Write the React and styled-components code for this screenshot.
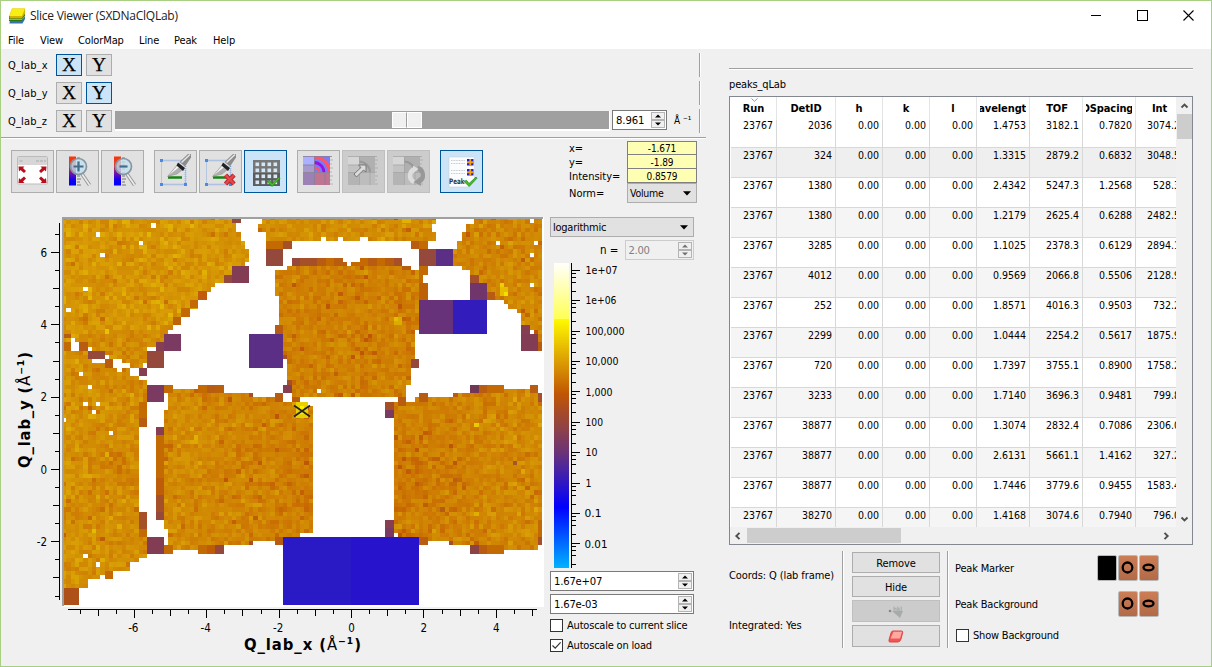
import React from "react";
import styled, { createGlobalStyle } from "styled-components";

const UI = `"DejaVu Sans Condensed", "DejaVu Sans", sans-serif`;

const Global = createGlobalStyle`
  html, body { margin: 0; padding: 0; }
  * { box-sizing: border-box; }
  body { font-family: ${UI}; font-stretch: condensed; font-size: 10.5px; color: #000; overflow: hidden; }
  svg { display: block; }
  svg text { font-family: ${UI}; font-stretch: condensed; }
`;

/* ---------- window ---------- */
const Window = styled.div`
  width: 1212px; height: 667px; display: flex; flex-direction: column;
  background: #f0f0f0; border: 1px solid #a9cf82;
`;
const TitleBar = styled.header`
  height: 29px; background: #fff; display: flex; align-items: center; padding-left: 7px;
`;
const Title = styled.span`
  font-family: "Open Sans", sans-serif; font-stretch: normal; font-size: 12px; letter-spacing: -0.26px;
  margin-left: 4px; flex: 1; color: #222;
`;
const WinButton = styled.div`
  width: 46px; height: 29px; display: flex; align-items: center; justify-content: center;
`;
const MenuBar = styled.nav`
  height: 19px; background: #fff; display: flex; padding-left: 7px; line-height: 21px;
`;
const MenuItem = styled.span`
  width: ${(p) => p.$w}px; letter-spacing: -0.12px; font-size: 11px; white-space: nowrap;
`;
const Body = styled.div`flex: 1; display: flex; min-height: 0;`;
const Left = styled.section`width: 705px; display: flex; flex-direction: column;`;
const Right = styled.section`width: 464px; margin-left: 23px; display: flex; flex-direction: column; padding-top: 19px;`;

/* ---------- dimension rows ---------- */
const DimRows = styled.div`
  height: 89px; padding: 5px 0 0 7px; border-bottom: 1px solid #a0a0a0; box-shadow: 0 1px #fff;
`;
const DimRow = styled.div`height: 28px; display: flex; align-items: flex-start;`;
const DimName = styled.span`width: 48px; line-height: 23px; font-size: 11px; letter-spacing: 0.15px;`;
const AxisButton = styled.button`
  width: 26px; height: 22px; padding: 0; margin-right: 4px; display: flex; align-items: center; justify-content: center;
  font-family: "Liberation Serif", serif; font-stretch: normal; font-size: 19.5px; line-height: 20px; color: #000;
  -webkit-text-stroke: 0.25px #000;
  background: ${(p) => (p.$on ? "#cce4f7" : "#e1e1e1")};
  border: 1px solid ${(p) => (p.$on ? "#005499" : "#adadad")};
`;
const RowEnd = styled.div`
  width: 2px; height: 24px; margin-left: auto; margin-right: 5px; margin-top: -1px;
  border-left: 1px solid #a0a0a0; border-right: 1px solid #fff;
`;
const Slider = styled.div`
  width: 495px; height: 20px; margin-left: -1px; margin-top: 1px; background: #a0a0a0;
  border-right: 1px solid #fff; border-bottom: 2px solid #fff; padding: 1px 0 0 277px; display: flex;
`;
const Handle = styled.div`
  width: 15px; height: 16px; background: #f0f0f0; border: 1px solid #fff;
  border-right-color: ${(p) => (p.$first ? "#a0a0a0" : "#fff")};
`;
const Unit = styled.span`margin-left: 7px; margin-top: 2px; line-height: 18px; font-size: 10px; white-space: nowrap;`;

/* ---------- inputs ---------- */
const SpinBox = styled.div`
  width: ${(p) => p.$w}px; height: 20px; display: flex; align-items: center; justify-content: space-between;
  padding: 0 1px 0 3px; font-size: 11.2px; letter-spacing: ${(p) => p.$ls ?? -0.1}px;
  margin: ${(p) => p.$top || 0}px 0 0 ${(p) => p.$inset || 0}px;
  background: ${(p) => (p.$off ? "#f0f0f0" : "#fff")}; color: ${(p) => (p.$off ? "#808080" : "#000")};
  border: 1px solid ${(p) => (p.$off ? "#cccccc" : "#7a7a7a")};
  & > span { padding-top: 1px; }
`;
const Spin = ({ value, ...rest }) => (
  <SpinBox {...rest}>
    <span>{value}</span>
    <svg width="14" height="16" viewBox="0 0 14 16">
      <rect x=".5" y=".5" width="13" height="7" fill="#f0f0f0" stroke="#b4b4b4" />
      <rect x=".5" y="8.5" width="13" height="7" fill="#f0f0f0" stroke="#b4b4b4" />
      <path d="M4 5.6 7 2.4 10 5.6ZM4 10.4 7 13.6 10 10.4Z" fill={rest.$off ? "#707070" : "#000"} />
    </svg>
  </SpinBox>
);
const ComboBox = styled.div`
  width: ${(p) => p.$w}px; height: 20px; background: #e1e1e1; border: 1px solid #adadad;
  display: flex; align-items: center; justify-content: space-between; padding: 0 5px 0 2px;
  font-size: ${(p) => p.$size || 11}px; letter-spacing: -0.25px;
`;
const Combo = ({ value, ...rest }) => (
  <ComboBox {...rest}>
    <span>{value}</span>
    <svg width="8" height="5" viewBox="0 0 8 5"><path d="M0 .3H8L4 4.6Z" /></svg>
  </ComboBox>
);
const CheckRow = styled.label`
  display: flex; align-items: center; height: 13px; gap: ${(p) => p.$gap ?? 5}px; white-space: nowrap;
  font-size: 11px; letter-spacing: -0.2px; margin-top: ${(p) => p.$top}px; margin-left: ${(p) => p.$inset || 0}px;
`;
const Box = styled.span`width: 13px; height: 13px; background: #fff; border: 1px solid #333; flex: none;`;
const Check = ({ on, children, ...rest }) => (
  <CheckRow {...rest}>
    <Box>{on && <svg width="11" height="11" viewBox="0 0 11 11"><path d="M1.5 5.5 4.2 8.2 9.6 2.3" fill="none" stroke="#333" strokeWidth="1.2" /></svg>}</Box>
    <span>{children}</span>
  </CheckRow>
);

/* ---------- toolbar ---------- */
const ToolArea = styled.div`height: 73px; display: flex; padding-left: 10px;`;
const Tools = styled.div`display: flex; padding-top: 12px; gap: 2px; width: 558px;`;
const Tool = styled.button`
  width: 43px; height: 43px; padding: 0; display: flex; align-items: center; justify-content: center;
  margin-left: ${(p) => p.$gap || 0}px;
  background: ${(p) => (p.$on ? "#cce4f7" : p.$off ? "#cccccc" : "#e1e1e1")};
  border: 1px solid ${(p) => (p.$on ? "#005499" : p.$off ? "#bfbfbf" : "#adadad")};
`;
const Info = styled.div`display: grid; grid-template-columns: 58px 70px; grid-template-rows: 14px 14px 14px 20px; padding-top: 3px;`;
const InfoName = styled.span`line-height: 15px; font-size: 11px; letter-spacing: 0; padding-top: ${(p) => p.$top || 0}px; white-space: nowrap;`;
const InfoValue = styled.span`
  background: #ffffb4; border: 1px solid #808080; border-top-width: ${(p) => (p.$first ? 1 : 0)}px;
  text-align: center; font-size: 10px; line-height: ${(p) => (p.$first ? 14 : 15)}px; height: 14px; letter-spacing: -0.1px;
`;

const Ramp = () => (
  <>
    <rect x="7" y="1.500" width="7" height="29" fill="url(#ramp)" />
    <path d="M15 3h3M15 7h3M15 10h3M15 14h3M15 18h3M15 21h3M15 24h4M15 27h3M15 30h4" stroke="#777" />
  </>
);
const Lens = ({ plus }) => (
  <>
    <path d="M20 19 27.500 30" stroke="#999" strokeWidth="3.600" />
    <path d="M20 19 27.500 30" stroke="#eee" strokeWidth="1.500" />
    <circle cx="16.500" cy="11.500" r="8" fill="#c2dff0" fillOpacity=".78" stroke="#8796a0" strokeWidth="1.700" />
    <path d={plus ? "M11.500 11.500H21.500M16.500 6.500V16.500" : "M12.500 11.500H20.500"} stroke="#426d8a" strokeWidth="2.200" />
  </>
);
const Brush = () => (
  <>
    <path d="M4.500 6.500H26M28.500 12V30M4.500 30.500H28.500" fill="none" stroke="#7ba2dc" strokeWidth="1.500" strokeDasharray="1 1" />
    <path d="M4.500 6.500V30.500M28.500 14V30" fill="none" stroke="#a9bfdf" strokeWidth=".8" />
    <path d="M3 5h3v3H3ZM3 29h3v3H3ZM27 29h3v3H27Z" fill="#478ae8" />
    <path d="M11 23.500H25" stroke="#148414" strokeWidth="2.500" />
    <path d="M10.500 22.500 21 10 27 14.500 20 20Z" fill="#b0b0b0" stroke="#888" strokeWidth=".5" />
    <path d="M12 21 21 11 23 12.500Z" fill="#f5f5f5" />
    <path d="M21 8.500 28 14 26 17 19.500 11.500Z" fill="#222" />
    <path d="M22.500 8 31 0H34V3.500L28 12.500Z" fill="#8c8c8c" />
    <path d="M24.500 8.500 33 0.500" stroke="#e8e8e8" strokeWidth="1.400" />
  </>
);
const Tick = ({ x, y }) => (
  <path transform={`translate(${x} ${y})`} d="M0 4.500 2.500 3.300 5 6.500 12 0 13 1.200 5.200 9.500Z" fill="#45bd27" stroke="#24831a" strokeWidth=".7" />
);
const Rebin = ({ grey }) => (
  <>
    <defs><clipPath id="quad"><rect x="11" y="1" width="16" height="16.500" /></clipPath></defs>
    <rect x="0" y="1" width="11" height="9" fill={grey ? "#d6d6d6" : "#aab2ff"} />
    <rect x="0" y="10" width="11" height="7.500" fill={grey ? "#c3c3c3" : "#a79bce"} />
    <rect x="0" y="17.500" width="11" height="12.500" fill={grey ? "#b4b4b4" : "#9b82b5"} />
    <rect x="11" y="17.500" width="16" height="12.500" fill={grey ? "#bdbdbd" : "#bd7592"} />
    <rect x="11" y="1" width="16" height="16.500" fill={grey ? "#b0b0b0" : "#747cff"} />
    <g clipPath="url(#quad)" fill="none">
      {grey ? (
        <circle cx="11" cy="17.500" r="11" stroke="#999" strokeWidth="2.200" />
      ) : (
        <>
          <circle cx="11" cy="17.500" r="5" stroke="#ff5561" strokeWidth="2.500" />
          <circle cx="11" cy="17.500" r="10" stroke="#9a10e0" strokeWidth="2.800" />
          <circle cx="11" cy="17.500" r="15.500" stroke="#ff5561" strokeWidth="3.600" />
        </>
      )}
    </g>
    <path d="M11.500 1V30M0 17.500H27M0 10H11M22 17.500V30M0 1.500H29" stroke={grey ? "#a5a5a5" : "#8a7c9b"} fill="none" strokeWidth=".8" />
    <path d="M27 5h3M27 9h2M27 13h3M27 17h2M27 21h3M27 25h2M27 29h3" stroke="#aaa" strokeWidth=".8" />
  </>
);

const icons = {
  fit: (
    <>
      <rect x=".5" y="1.500" width="30" height="27.500" rx="1" fill="#fff" stroke="#bbb" />
      <rect x="1" y="2" width="29" height="8" fill="#d6d6d6" />
      <path d="M2.500 6h3M19 6h3M23 6h3M27 6h2" stroke="#aaa" />
      <g fill="#b80d1c" transform="translate(-.5 -.5)">
        <path d="M2 12 8 12 6.500 13.500 9.500 16.500 7.500 18.500 4 15.500 2.500 17Z" />
        <path d="M30 12 24 12 25.500 13.500 22.500 16.500 24.500 18.500 28 15.500 29.500 17Z" />
        <path d="M2 28.500 8 28.500 6.500 27 9.500 24 7.500 22 4 25 2.500 23.500Z" />
        <path d="M30 28.500 24 28.500 25.500 27 22.500 24 24.500 22 28 25 29.500 23.500Z" />
      </g>
    </>
  ),
  zoomIn: <><Ramp /><Lens plus /></>,
  zoomOut: <><Ramp /><Lens /></>,
  line: <g transform="translate(-3 -1)"><Brush /></g>,
  clear: <g transform="translate(-3 -1)"><Brush /><path d="M23.500 21 32 30M32 21 23.500 30" stroke="#b9282d" strokeWidth="4.600" /><path d="M23.500 21 32 30M32 21 23.500 30" stroke="#e5484a" strokeWidth="2.500" /></g>,
  grid: (
    <>
      <rect x="3" y="5" width="27" height="26" rx=".5" fill="#5c5c5c" />
      <rect x="3" y="5" width="27" height="13" rx=".5" fill="#777" />
      {[0, 1, 2, 3].map((r) => [0, 1, 2, 3].map((c) => (
        <rect key={`${r}${c}`} x={5.5 + c * 6} y={7.5 + r * 6} width="3.600" height="3.600" fill="#d3e7f5" />
      )))}
      <Tick x={17} y={22} />
    </>
  ),
  rebin: <Rebin />,
  rebinLock: <><Rebin grey /><path d="M6 19 13 12.500 10.500 10H18V17L15.500 15 8.500 22Z" fill="#dcdcdc" stroke="#777" /></>,
  rebinNow: <><Rebin grey /><path d="M22 14A7 7 0 0 0 21 27" fill="none" stroke="#dedede" strokeWidth="4.500" /><path d="M24.500 13A7.500 7.500 0 0 1 25.500 27" fill="none" stroke="#989898" strokeWidth="4.500" /><path d="M20 10.500 25.500 14 20 18.500Z" fill="#dedede" /><path d="M28 31 21 27 27 22Z" fill="#989898" /></>,
  peaks: (
    <>
      <path d="M3 2H28.500V25L22 32H3Z" fill="#fbfcfd" stroke="#ccd2d6" strokeWidth=".6" />
      <path d="M5 5.500h14M5 8.500h14M5 15.500h14M5 18.500h14" stroke="#c9c9cf" strokeDasharray="1 .6" />
      {[4, 14].map((y) => (
        <g key={y}><rect x="21" y={y} width="6.500" height="6.500" fill="#2421cc" /><path d={`M24.250 ${y}v6.500M21 ${y + 3.25}h6.500`} stroke="#f5a01c" strokeWidth="1.800" /></g>
      ))}
      <text x="3" y="29" fontSize="7.500" fontWeight="bold" fill="#333" textLength="15.500" lengthAdjust="spacingAndGlyphs">Peak</text>
      <Tick x={18} y={22} />
    </>
  ),
};
const ToolIcon = ({ name }) => (
  <svg width="32" height="33" viewBox="0 0 32 33" overflow="visible">
    <defs>
      <linearGradient id="ramp" x2="0" y2="1"><stop stopColor="#ff3300" /><stop offset=".25" stopColor="#e04030" /><stop offset=".6" stopColor="#6a10b0" /><stop offset=".8" stopColor="#1500f0" /><stop offset="1" stopColor="#0000ff" /></linearGradient>
    </defs>
    {icons[name]}
  </svg>
);
const tools = [
  { name: "fit" }, { name: "zoomIn" }, { name: "zoomOut" },
  { name: "line", gap: 8 }, { name: "clear" }, { name: "grid", on: true },
  { name: "rebin", gap: 8 }, { name: "rebinLock", off: true }, { name: "rebinNow", off: true },
  { name: "peaks", gap: 8, on: true },
];

/* ---------- detector slice data ---------- */
const CW = 4.25, CH = 4.23, X0 = 62, Y0 = 215.5, COLS = 113, ROWS = 92;
const regions = [
  { pts: [[60,210],[232,210],[236,223],[236,232],[241,232],[241,241],[245,241],[245,249],[249,249],[249,262],[245,262],[245,266],[232,266],[232,275],[224,275],[224,283],[215,283],[215,287],[211,287],[211,292],[207,292],[207,300],[198,300],[198,308],[190,308],[190,317],[181,317],[181,325],[173,325],[173,329],[168,329],[168,334],[164,334],[164,346],[147,346],[147,427],[139,427],[139,537],[147,537],[147,558],[139,558],[139,562],[130,562],[130,571],[113,571],[113,579],[88,579],[88,588],[60,588]], base: 0.68 },
  { pts: [[262,210],[436,210],[436,224],[432,224],[432,232],[436,232],[436,241],[428,241],[428,249],[411,249],[411,241],[292,241],[292,249],[266,249],[266,232],[258,232],[258,224],[262,224]], base: 0.6 },
  { pts: [[474,210],[543,210],[543,342],[534,342],[534,334],[530,334],[530,325],[521,325],[521,317],[517,312],[504,304],[504,300],[487,300],[487,283],[479,283],[470,270],[462,270],[462,266],[453,266],[453,249],[457,249],[457,241],[462,241],[462,232],[466,232],[466,224],[474,224]], base: 0.52 },
  { pts: [[287,266],[411,266],[411,270],[419,270],[419,330],[415,330],[415,359],[411,359],[411,385],[406,385],[406,397],[292,397],[292,385],[287,385],[287,359],[283,359],[283,334],[279,334],[279,296],[275,296],[275,270],[287,270]], base: 0.45 },
  { pts: [[168,393],[173,389],[198,389],[198,385],[224,385],[224,393],[253,393],[253,397],[275,397],[275,402],[304,402],[304,406],[313,406],[313,533],[300,533],[300,537],[275,537],[275,541],[253,541],[253,545],[224,545],[224,550],[173,550],[173,554],[164,554],[164,545],[168,545],[168,529],[164,524],[164,410],[168,410]], base: 0.51 },
  { pts: [[394,406],[398,402],[415,402],[415,397],[453,397],[453,393],[479,393],[479,389],[538,389],[538,402],[543,402],[543,537],[538,537],[538,550],[504,550],[504,554],[479,554],[479,545],[449,545],[449,541],[428,541],[419,537],[398,537],[398,533],[394,533]], base: 0.49 },
];
const DK = "#c46a02", OB = "#b85c12", BR = "#a55029", BP = "#95483c", PB = "#853f50", PP = "#7a3a62", PU = "#5b2f86", W = "#ffffff";
// [x1, y1, x2, y2, colour]
const patches = [
  [232,217,241,223,BP],[232,266,249,283,"#823d54"],[224,275,232,283,BP],[198,291,207,300,"#c05c0c"],[190,300,198,308,DK],[181,308,190,317,DK],[173,317,181,325,"#bd6409"],
  [164,334,181,351,PP],[156,342,164,351,PB],[147,351,164,368,BP],[139,368,147,376,PB],[143,363,147,368,W],
  [62,334,71,338,OB],[62,342,71,351,DK],[71,338,75,342,W],[71,342,79,351,W],[79,342,88,351,OB],[88,347,92,351,W],[88,351,105,359,BP],[92,359,105,363,W],[105,359,113,368,OB],[105,355,109,359,W],
  [113,359,122,368,W],[117,368,122,372,W],[122,363,130,368,W],[130,368,139,376,W],[139,376,147,380,W],
  [147,385,164,402,PP],[164,385,173,393,DK],[139,402,147,418,DK],[139,418,147,427,OB],[156,427,164,435,PB],[156,435,164,478,DK],[156,478,164,495,"#bd5d0c"],[156,495,164,512,BR],[156,512,164,520,BP],
  [139,512,147,529,BR],[139,529,147,537,DK],[147,537,164,554,"#823d54"],[62,588,79,605,"#ae5119"],[100,575,105,579,W],[105,571,113,579,DK],[164,545,173,554,DK],
  [198,385,207,393,DK],[207,385,215,393,OB],[215,385,224,393,"#ba6008"],[249,393,253,397,BR],[275,393,283,402,OB],[292,397,300,402,OB],[283,385,292,393,PB],
  [198,545,207,554,DK],[207,545,215,554,"#c05c05"],[215,545,224,554,BP],[249,541,253,545,BR],[275,537,283,545,OB],
  [266,241,283,249,DK],[283,241,292,249,BR],[266,249,283,266,BP],[321,237,326,241,W],[338,237,343,241,W],[360,237,368,241,W],
  [411,241,419,249,OB],[419,241,428,249,DK],[419,249,436,266,BP],[436,249,453,266,PU],
  [292,258,300,266,BP],[300,258,317,266,BR],[317,258,326,266,OB],[326,258,334,266,DK],[334,258,343,266,OB],[343,262,347,266,OB],[351,262,360,266,DK],[360,258,368,266,DK],[368,258,377,266,OB],[377,258,385,266,DK],[385,258,394,266,OB],[394,258,402,266,BR],[402,266,411,270,OB],
  [419,266,428,275,DK],[419,275,423,283,DK],[419,283,428,300,"#bd6007"],[419,300,453,334,"#67327a"],[453,300,487,334,"#331cbc"],[249,334,283,368,PU],
  [470,275,479,283,BR],[470,283,487,300,"#70366b"],[487,292,495,300,OB],[521,325,530,334,PB],[521,334,538,351,"#823d54"],[538,342,543,351,OB],[530,330,534,334,W],
  [275,325,283,334,OB],[283,355,287,359,BR],[411,359,419,368,BP],[287,380,292,385,BR],[317,389,321,393,W],[385,402,394,410,BR],[385,410,394,418,PP],[398,397,406,406,OB],
  [419,393,428,402,OB],[453,393,458,397,OB],[470,385,479,393,"#713757"],[479,385,487,393,OB],[487,385,504,393,DK],[530,385,538,393,OB],[538,393,543,402,BR],
  [385,520,394,528,PB],[385,528,394,537,PP],[419,537,428,545,OB],[449,541,453,545,BR],[470,545,479,554,"#8d4244"],[479,545,487,554,OB],[487,545,504,554,DK],[538,520,543,537,DK],[538,537,543,545,BR],
  [283,537,351,605,"#291ac6"],[351,537,419,605,"#2813cc"],
  [151,223,156,228,W],[96,232,100,237,W],[139,241,143,245,W],[100,253,105,257,W],[83,287,88,291,W],[66,308,71,312,W],[79,372,83,376,W],[88,385,92,389,W],[83,402,88,406,W],[96,402,100,406,W],[92,410,96,414,W],[62,418,66,422,W],[109,431,113,435,W],[83,554,88,558,W],[96,562,100,567,W],
  [530,219,534,223,W],[496,241,500,245,W],[534,241,538,245,W],[530,253,534,257,W],[530,283,534,287,W],
  [105,329,109,334,"#e4c400"],[92,529,96,533,"#e0bd00"],[190,440,198,444,"#dda800"],[194,435,198,440,"#deb200"],[402,219,411,223,"#e3b000"],
  [500,287,508,296,"#e6bd00"],[504,292,508,296,"#f4e000"],[500,283,504,287,"#eed000"],[394,317,402,325,"#dcab00"],[394,317,398,321,"#e5bd00"],[474,423,479,427,"#eacb00"],[474,512,479,516,"#dfb000"],
  [296,402,308,418,"#e8d000"],[300,406,304,414,"#fff000"],[292,402,296,406,"#dda000"],[513,461,517,465,"#a95520"],[453,478,457,482,"#b85f10"],[440,507,445,512,"#b55c10"],
];

function inside(x, y, pts) {
  let hit = false;
  for (let i = 0, j = pts.length - 1; i < pts.length; j = i++) {
    const [xi, yi] = pts[i], [xj, yj] = pts[j];
    if (yi > y !== yj > y && x < ((xj - xi) * (y - yi)) / (yj - yi) + xi) hit = !hit;
  }
  return hit;
}
const stops = [[190, 86, 6], [200, 106, 2], [204, 120, 2], [208, 133, 3], [212, 147, 4], [219, 162, 5], [226, 180, 4]];
function shade(v) {
  const t = Math.max(0, Math.min(0.999, v)) * (stops.length - 1);
  const i = Math.floor(t), f = Math.round((t - i) * 4) / 4;
  const mix = (k) => Math.round(stops[i][k] + (stops[i + 1][k] - stops[i][k]) * f);
  return `rgb(${mix(0)},${mix(1)},${mix(2)})`;
}
function buildCells() {
  let seed = 90211;
  const rnd = () => ((seed = (seed * 1664525 + 1013904223) >>> 0) / 4294967296);
  const paths = {};
  for (let r = 0; r < ROWS; r++) {
    let streak = 0;
    for (let c = 0; c < COLS; c++) {
      const x = Math.round(X0 + c * CW), x2 = Math.round(X0 + (c + 1) * CW);
      const y = Math.round(Y0 + r * CH), y2 = Math.round(Y0 + (r + 1) * CH);
      const mx = (x + x2) / 2, my = (y + y2) / 2;
      const reg = regions.find((g) => inside(mx, my, g.pts));
      const noise = (rnd() + rnd() + rnd()) / 3 - 0.5;
      const pick = rnd();
      if (pick < 0.08) streak = my > 440 && my < 510 ? -0.14 : -0.03;
      else if (pick > 0.8) streak = 0;
      if (!reg) continue;
      let v = reg.base + noise * 0.72 + streak;
      if (pick > 0.955) v -= 0.3;
      if (reg === regions[4]) v += (240 - mx) / 900;
      if (reg === regions[5]) v += (mx - 460) / 900;
      if (reg === regions[0]) v += my < 330 ? 0.02 : -0.06 - (mx - 100) / 1000;
      const key = shade(v);
      paths[key] = (paths[key] || "") + `M${x} ${y}H${x2}V${y2}H${x}Z`;
    }
  }
  return Object.entries(paths);
}
const cells = buildCells();

const PlotRow = styled.div`display: flex; height: 455px;`;
const PlotCanvas = styled.svg`flex: none;`;
const range = (a, b, s) => Array.from({ length: Math.round((b - a) / s) + 1 }, (_, i) => a + i * s);
const tickLen = (v) => (v % 2 === 0 ? 8 : v % 1 === 0 ? 6 : 4);

function SlicePlot() {
  return (
    <PlotCanvas width="549" height="455" viewBox="1 211 549 455">
      <defs><clipPath id="canvas"><rect x="64" y="219" width="478" height="386" /></clipPath></defs>
      <rect x="62" y="217" width="482" height="390" fill="#fff" />
      <path d="M62 217H543V219H64V606H62Z" fill="#a0a0a0" />
      <g clipPath="url(#canvas)" shapeRendering="crispEdges">
        {cells.map(([fill, d]) => <path key={fill} d={d} fill={fill} />)}
        {patches.map(([x1, y1, x2, y2, fill], i) => <rect key={i} x={x1} y={y1} width={x2 - x1} height={y2 - y1} fill={fill} />)}
      </g>
      <path d="M294 405.500 310 416.500M310 405.500 294 416.500" stroke="#222" strokeWidth="1.700" />
      <g stroke="#000" shapeRendering="crispEdges">
        <path d="M59.500 223V600M68 609.500H537" />
        {range(-3.5, 6.5, 0.5).map((v) => <path key={v} d={`M59 ${Math.round(469 - v * 36.15) + 0.5}h${-tickLen(v)}`} />)}
        {range(-7.5, 5, 0.5).map((v) => <path key={v} d={`M${Math.round(351 + v * 36.2) + 0.5} 610v${tickLen(v)}`} />)}
      </g>
      <g fontSize="11.500">
        {[6, 4, 2, 0, -2].map((v) => <text key={v} x="47" y={Math.round(473.5 - v * 36.15)} textAnchor="end">{v}</text>)}
        {[-6, -4, -2, 0, 2, 4].map((v) => <text key={v} x={351.5 + v * 36.2 - (v < 0 ? 1 : 0)} y="632" textAnchor="middle">{v}</text>)}
      </g>
      <g fontSize="16.500" fontWeight="bold">
        <text x="244" y="650" textLength="117">Q_lab_x (<tspan fontWeight="normal">Å</tspan>⁻¹)</text>
        <text transform="translate(30 468) rotate(-90)" textLength="116">Q_lab_y (<tspan fontWeight="normal">Å</tspan>⁻¹)</text>
      </g>
    </PlotCanvas>
  );
}

/* ---------- colour scale ---------- */
const ScalePanel = styled.div`width: 144px; padding-top: 6px; display: flex; flex-direction: column; flex: none;`;
const PowerRow = styled.div`display: flex; margin-top: 3px; align-items: center; font-size: 11.5px; padding-left: 50px; height: 20px; span { white-space: nowrap; }`;
const scaleLabels = [["1e+07", 32], ["1e+06", 31], ["100,000", 39], ["10,000", 33], ["1,000", 27], ["100", 17.5], ["10", 12], ["1", 6], ["0.1", 17], ["0.01", 23]];
const ColourScale = () => (
  <svg width="144" height="308" viewBox="550 260 144 308">
    <defs>
      <linearGradient id="cmap" x2="0" y2="1">
        <stop stopColor="#fffffc" /><stop offset=".183" stopColor="#ffff55" /><stop offset=".184" stopColor="#fffa00" />
        <stop offset=".43" stopColor="#c05504" /><stop offset=".62" stopColor="#6c3476" /><stop offset=".8" stopColor="#0000ff" /><stop offset="1" stopColor="#00b4ff" />
      </linearGradient>
    </defs>
    <rect x="554" y="263" width="15" height="305" fill="url(#cmap)" />
    <g stroke="#000" shapeRendering="crispEdges">
      <path d="M571.500 263V568" />
      {scaleLabels.map(([t], i) => {
        const y = 269.7 + i * 30.4;
        return (
          <React.Fragment key={t}>
            <path d={`M572 ${Math.round(y) + 0.5}h8`} />
            {[3, 7, 12, 21].map((o) => <path key={o} d={`M572 ${Math.round(y + o) + 0.5}h4`} />)}
          </React.Fragment>
        );
      })}
    </g>
    <g fontSize="11">
      {scaleLabels.map(([t, w], i) => <text key={t} x={i > 7 ? 584.5 : 585.5} y={Math.round(273.9 + i * 30.4)} textLength={w} lengthAdjust="spacingAndGlyphs">{t}</text>)}
    </g>
  </svg>
);

/* ---------- peaks table ---------- */
const Rule = styled.div`height: 2px; background: #a0a0a0; border-bottom: 1px solid #fff;`;
const TableName = styled.div`height: 26px; line-height: 29px; font-size: 11px; letter-spacing: -0.15px;`;
const TableFrame = styled.div`
  height: 449px; border: 1px solid #828790; display: grid; grid-template: 430px 17px / 446px 16px; background: #f0f0f0;
`;
const Grid = styled.div`overflow: hidden; background: #fff; border-left: 1px solid #fff;`;
const Line = styled.div`
  display: grid; grid-template-columns: 46px 59px 47px 47px 47px 53px 53px 53px 47px; height: ${(p) => (p.$head ? 21 : 30)}px;
  background: ${(p) => p.$bg || "#fff"};
`;
const Cell = styled.span`
  border-right: 1px solid #d8d8d8; border-bottom: 1px solid #d8d8d8; text-align: right; padding-right: 3px;
  line-height: 15px; font-size: 10.5px; white-space: nowrap;
  &:last-child { border-right: 0; }
`;
const Head = styled.span`
  border-right: 1px solid #e5e5e5; font-weight: bold; font-size: 11px; line-height: 23px; letter-spacing: -0.1px;
  display: flex; justify-content: center; position: relative;
  &:last-child { border-right: 0; }
`;
const HeadText = styled.span`
  width: calc(100% - 6px); overflow: hidden; display: flex; justify-content: center; white-space: nowrap;
  text-indent: ${(p) => p.$shift}px;
`;
const SortMark = styled.svg`position: absolute; top: 1px; left: 20px;`;
const VScroll = styled.div`display: flex; flex-direction: column; align-items: center; padding-top: 5px;`;
const VThumb = styled.div`width: 15px; height: 25px; background: #cdcdcd; margin-top: 4px; margin-bottom: auto;`;
const HScroll = styled.div`display: flex; align-items: center; padding: 0 6px 0 4px; svg:last-child { margin-left: auto; }`;
const HThumb = styled.div`width: 154px; height: 15px; background: #cdcdcd; margin-left: 6px;`;
const ChevronSvg = styled.svg`margin-bottom: ${(p) => p.$bottom || 0}px;`;
const Chevron = ({ d, ...rest }) => <ChevronSvg width="7" height="8" viewBox="0 0 7 8" overflow="visible" {...rest}><path d={d} fill="none" stroke="#505050" strokeWidth="1.900" /></ChevronSvg>;

const heads = [["Run", 0], ["DetID", 0], ["h", 0], ["k", 0], ["l", 0], ["Wavelength", -5], ["TOF", 2], ["DSpacing", -3], ["Int", 0]];
const peaks = [
  ["2036", "1.4753", "3182.1", "0.7820", "3074.2"],
  ["324", "1.3315", "2879.2", "0.6832", "3048.5"],
  ["1380", "2.4342", "5247.3", "1.2568", "528.3"],
  ["1380", "1.2179", "2625.4", "0.6288", "2482.5"],
  ["3285", "1.1025", "2378.3", "0.6129", "2894.1"],
  ["4012", "0.9569", "2066.8", "0.5506", "2128.9"],
  ["252", "1.8571", "4016.3", "0.9503", "732.2"],
  ["2299", "1.0444", "2254.2", "0.5617", "1875.9"],
  ["720", "1.7397", "3755.1", "0.8900", "1758.2"],
  ["3233", "1.7140", "3696.3", "0.9481", "799.8"],
  ["38877", "1.3074", "2832.4", "0.7086", "2306.0"],
  ["38877", "2.6131", "5661.1", "1.4162", "327.2"],
  ["38877", "1.7446", "3779.6", "0.9455", "1583.4"],
  ["38270", "1.4168", "3074.6", "0.7940", "796.0"],
];

/* ---------- peak controls ---------- */
const Controls = styled.div`display: flex; padding-top: 6px; height: 104px; font-size: 11px;`;
const Facts = styled.div`width: 113px; display: flex; flex-direction: column; gap: 35px; padding-top: 17px; line-height: 15px; letter-spacing: -0.1px; white-space: nowrap;`;
const Divider = styled.div`width: 2px; height: 97px; border-left: 1px solid #a0a0a0; border-right: 1px solid #fff;`;
const Buttons = styled.div`width: 103px; padding: 1px 7px 0 8px; display: flex; flex-direction: column; gap: 3px;`;
const Push = styled.button`
  height: ${(p) => p.$h}px; padding: 1px 0 0; font: inherit; letter-spacing: -0.1px; color: #000; display: flex; justify-content: center; align-items: center;
  background: ${(p) => (p.$off ? "#cccccc" : "#e1e1e1")}; border: 1px solid ${(p) => (p.$off ? "#bfbfbf" : "#adadad")};
`;
const Styles = styled.div`flex: 1; padding-left: 6px;`;
const StyleRow = styled.div`display: flex; align-items: center; height: 26px; margin-top: ${(p) => p.$top}px; gap: 1px; padding-right: 34px; letter-spacing: -0.18px; & > span:first-child { flex: 1; }`;
const Swatch = styled.span`
  width: 20px; height: 26px; border: 1px solid #b8b8b8; border-radius: 2px; display: flex; align-items: center; justify-content: center;
  background: ${(p) => (p.$black ? "#000" : "linear-gradient(#cc7d56, #b26a47)")};
`;
const Ring = ({ flat }) => (
  <Swatch><svg width="14" height="14" viewBox="0 0 14 14"><ellipse cx="6.500" cy="6.500" rx={flat ? 5 : 4.8} ry={flat ? 2.8 : 5} fill="none" stroke="#000" strokeWidth="2.300" /></svg></Swatch>
);

export default function App() {
  return (
    <Window>
      <Global />
      <TitleBar>
        <svg width="18" height="16" viewBox="0 0 18 16">
          <path d="M2 10.500H14L17 8V11L14.500 15.500H1.500Z" fill="#3973ad" />
          <path d="M1 8H14L17 5V9L14 13H1Z" fill="#287818" /><path d="M1 11.500H14L17 8" stroke="#b6d9a5" fill="none" strokeWidth=".7" />
          <path d="M4 .500H17V6L13.500 10.500H1.500V7Z" fill="#d4b300" /><path d="M4 .500H17L14 8H1.500Z" fill="#f6ee14" />
        </svg>
        <Title>Slice Viewer (SXDNaClQLab)</Title>
        <WinButton><svg width="10" height="10"><path d="M0 4.500H10" stroke="#000" /></svg></WinButton>
        <WinButton><svg width="11" height="11"><rect x=".5" y=".5" width="10" height="10" fill="none" stroke="#000" /></svg></WinButton>
        <WinButton><svg width="11" height="11"><path d="M.5 .5 10.500 10.500M10.500 .5 .5 10.500" stroke="#000" strokeWidth="1.100" /></svg></WinButton>
      </TitleBar>
      <MenuBar>
        {[["File", 32], ["View", 38], ["ColorMap", 61], ["Line", 35], ["Peak", 39], ["Help", 30]].map(([t, w]) => <MenuItem key={t} $w={w}>{t}</MenuItem>)}
      </MenuBar>
      <Body>
        <Left>
          <DimRows>
            {[["Q_lab_x", "X"], ["Q_lab_y", "Y"], ["Q_lab_z", ""]].map(([name, on]) => (
              <DimRow key={name}>
                <DimName>{name}</DimName>
                <AxisButton $on={on === "X"}>X</AxisButton>
                <AxisButton $on={on === "Y"}>Y</AxisButton>
                {!on && (
                  <>
                    <Slider><Handle $first /><Handle /></Slider>
                    <Spin value="8.961" $w={55} $inset={2} />
                    <Unit>Å ⁻¹</Unit>
                  </>
                )}
                <RowEnd />
              </DimRow>
            ))}
          </DimRows>
          <ToolArea>
            <Tools>
              {tools.map((t) => <Tool key={t.name} $gap={t.gap} $on={t.on} $off={t.off}><ToolIcon name={t.name} /></Tool>)}
            </Tools>
            <Info>
              <InfoName>x=</InfoName><InfoValue $first>-1.671</InfoValue>
              <InfoName>y=</InfoName><InfoValue>-1.89</InfoValue>
              <InfoName>Intensity=</InfoName><InfoValue>0.8579</InfoValue>
              <InfoName $top={3}>Norm=</InfoName><Combo value="Volume" $w={70} $size={10.5} />
            </Info>
          </ToolArea>
          <PlotRow>
            <SlicePlot />
            <ScalePanel>
              <Combo value="logarithmic" $w={144} />
              <PowerRow><span>n =</span><Spin value="2.00" $w={69} $off $inset={6} $ls={-0.3} /></PowerRow>
              <ColourScale />
              <Spin value="1.67e+07" $w={144} $top={3} $ls={-0.2} />
              <Spin value="1.67e-03" $w={144} $top={3} $ls={-0.2} />
              <Check $top={5} $gap={4}>Autoscale to current slice</Check>
              <Check $top={7} $gap={4} on>Autoscale on load</Check>
            </ScalePanel>
          </PlotRow>
        </Left>
        <Right>
          <Rule />
          <TableName>peaks_qLab</TableName>
          <TableFrame>
            <Grid>
              <Line $head>
                {heads.map(([h, shift], i) => (
                  <Head key={h}>
                    {i === 0 && <SortMark width="8" height="4"><path d="M.5 .5 3.500 3.300 6.500 .5" fill="none" stroke="#999" /></SortMark>}
                    <HeadText $shift={shift}>{h}</HeadText>
                  </Head>
                ))}
              </Line>
              {peaks.map(([det, ...rest], i) => (
                <Line key={i} $bg={i % 2 ? (i === 1 ? "#efefef" : "#f5f5f5") : "#fff"}>
                  {["23767", det, "0.00", "0.00", "0.00", ...rest].map((v, j) => <Cell key={j}>{v}</Cell>)}
                </Line>
              ))}
            </Grid>
            <VScroll>
              <Chevron d="M.5 5.500 3.500 2.500 6.500 5.500" />
              <VThumb />
              <Chevron d="M.5 2.500 3.500 5.500 6.500 2.500" $bottom={4} />
            </VScroll>
            <HScroll><Chevron d="M5.500 .8 2.300 4 5.500 7.200" /><HThumb /><Chevron d="M1.500 .8 4.700 4 1.500 7.200" /></HScroll>
          </TableFrame>
          <Controls>
            <Facts><span>Coords: Q (lab frame)</span><span>Integrated: Yes</span></Facts>
            <Divider />
            <Buttons>
              <Push $h={21}>Remove</Push>
              <Push $h={21}>Hide</Push>
              <Push $h={22} $off>
                <svg width="16" height="14" viewBox="0 0 16 14"><circle cx="2" cy="6" r="1.300" fill="#888" /><path d="M4 6H15L12 13Z" fill="#aaa" /><text x="5" y="5.500" fontSize="6" fill="#aaa" fontWeight="bold">hkl</text></svg>
              </Push>
              <Push $h={22}>
                <svg width="16" height="13" viewBox="0 0 16 13"><path d="M5 1H13.500Q15 1 14.700 2.500L13 9Q12 12 10 12H2Q.5 12 1 10L3 3Q3.500 1 5 1Z" fill="#f05555" stroke="#df4545" /><path d="M5.500 1.800H14L12 8.500H2.500Z" fill="#ffa9a0" /></svg>
              </Push>
            </Buttons>
            <Divider />
            <Styles>
              <StyleRow $top={4}><span>Peak Marker</span><Swatch $black /><Ring /><Ring flat /></StyleRow>
              <StyleRow $top={10}><span>Peak Background</span><Ring /><Ring flat /></StyleRow>
              <Check $top={12} $inset={1} $gap={4}>Show Background</Check>
            </Styles>
          </Controls>
        </Right>
      </Body>
    </Window>
  );
}
